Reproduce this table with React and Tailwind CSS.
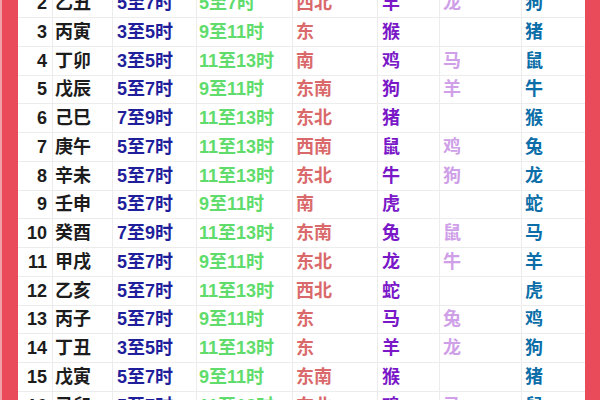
import React from "react";

const rows = [
  ["2", "乙丑", "5至7时", "5至7时", "西北", "羊", "龙", "狗"],
  ["3", "丙寅", "3至5时", "9至11时", "东", "猴", "", "猪"],
  ["4", "丁卯", "3至5时", "11至13时", "南", "鸡", "马", "鼠"],
  ["5", "戊辰", "5至7时", "9至11时", "东南", "狗", "羊", "牛"],
  ["6", "己巳", "7至9时", "11至13时", "东北", "猪", "", "猴"],
  ["7", "庚午", "5至7时", "11至13时", "西南", "鼠", "鸡", "兔"],
  ["8", "辛未", "5至7时", "11至13时", "东北", "牛", "狗", "龙"],
  ["9", "壬申", "5至7时", "9至11时", "南", "虎", "", "蛇"],
  ["10", "癸酉", "7至9时", "11至13时", "东南", "兔", "鼠", "马"],
  ["11", "甲戌", "5至7时", "9至11时", "东北", "龙", "牛", "羊"],
  ["12", "乙亥", "5至7时", "11至13时", "西北", "蛇", "", "虎"],
  ["13", "丙子", "5至7时", "9至11时", "东", "马", "兔", "鸡"],
  ["14", "丁丑", "3至5时", "11至13时", "东", "羊", "龙", "狗"],
  ["15", "戊寅", "5至7时", "9至11时", "东南", "猴", "", "猪"],
  ["16", "己卯", "5至7时", "11至13时", "东北", "鸡", "马", "鼠"],
];

function Row({ r }) {
  return (
    <div className="grid grid-cols-[35px_60px_84px_96px_85px_62px_82px_63px] h-[28.75px] border-b border-[#ececec] items-center text-[18px] leading-none">
      <div className="h-full flex items-center justify-end pr-[5px] border-r border-[#ececec] font-bold text-[#1c1c1c]">
        {r[0]}
      </div>
      <div className="h-full flex items-center pl-[2px] border-r border-[#ececec] font-semibold text-[#1c1c1c]">
        {r[1]}
      </div>
      <div className="h-full flex items-center pl-[4px] border-r border-[#ececec] font-bold text-[#1f1f9c]">
        {r[2]}
      </div>
      <div className="h-full flex items-center pl-[2px] border-r border-[#ececec] font-bold text-[#5fdc6c]">
        {r[3]}
      </div>
      <div className="h-full flex items-center pl-[3px] border-r border-[#ececec] font-bold text-[#d9696a]">
        {r[4]}
      </div>
      <div className="h-full flex items-center pl-[4px] border-r border-[#ececec] font-bold text-[#7a18c8]">
        {r[5]}
      </div>
      <div className="h-full flex items-center pl-[3px] border-r border-[#ececec] font-bold text-[#cfa0e8]">
        {r[6]}
      </div>
      <div className="h-full flex items-center pl-[3px] font-bold text-[#0b6ea8]">
        {r[7]}
      </div>
    </div>
  );
}

export default function App() {
  return (
    <div
      className="flex w-[600px] h-[400px] overflow-hidden bg-white"
      style={{ fontFamily: '"Liberation Sans", "Noto Sans CJK SC", sans-serif' }}
    >
      <div className="w-[18px] shrink-0 bg-[#e94b5b] border-l-2 border-[#f1a0a8]" />
      <div className="flex-1 flex flex-col">
        <div className="-mt-[10.75px]">
          {rows.map((r) => (
            <Row key={r[0]} r={r} />
          ))}
        </div>
      </div>
      <div className="w-[15px] shrink-0 bg-[#e94b5b]" />
    </div>
  );
}
